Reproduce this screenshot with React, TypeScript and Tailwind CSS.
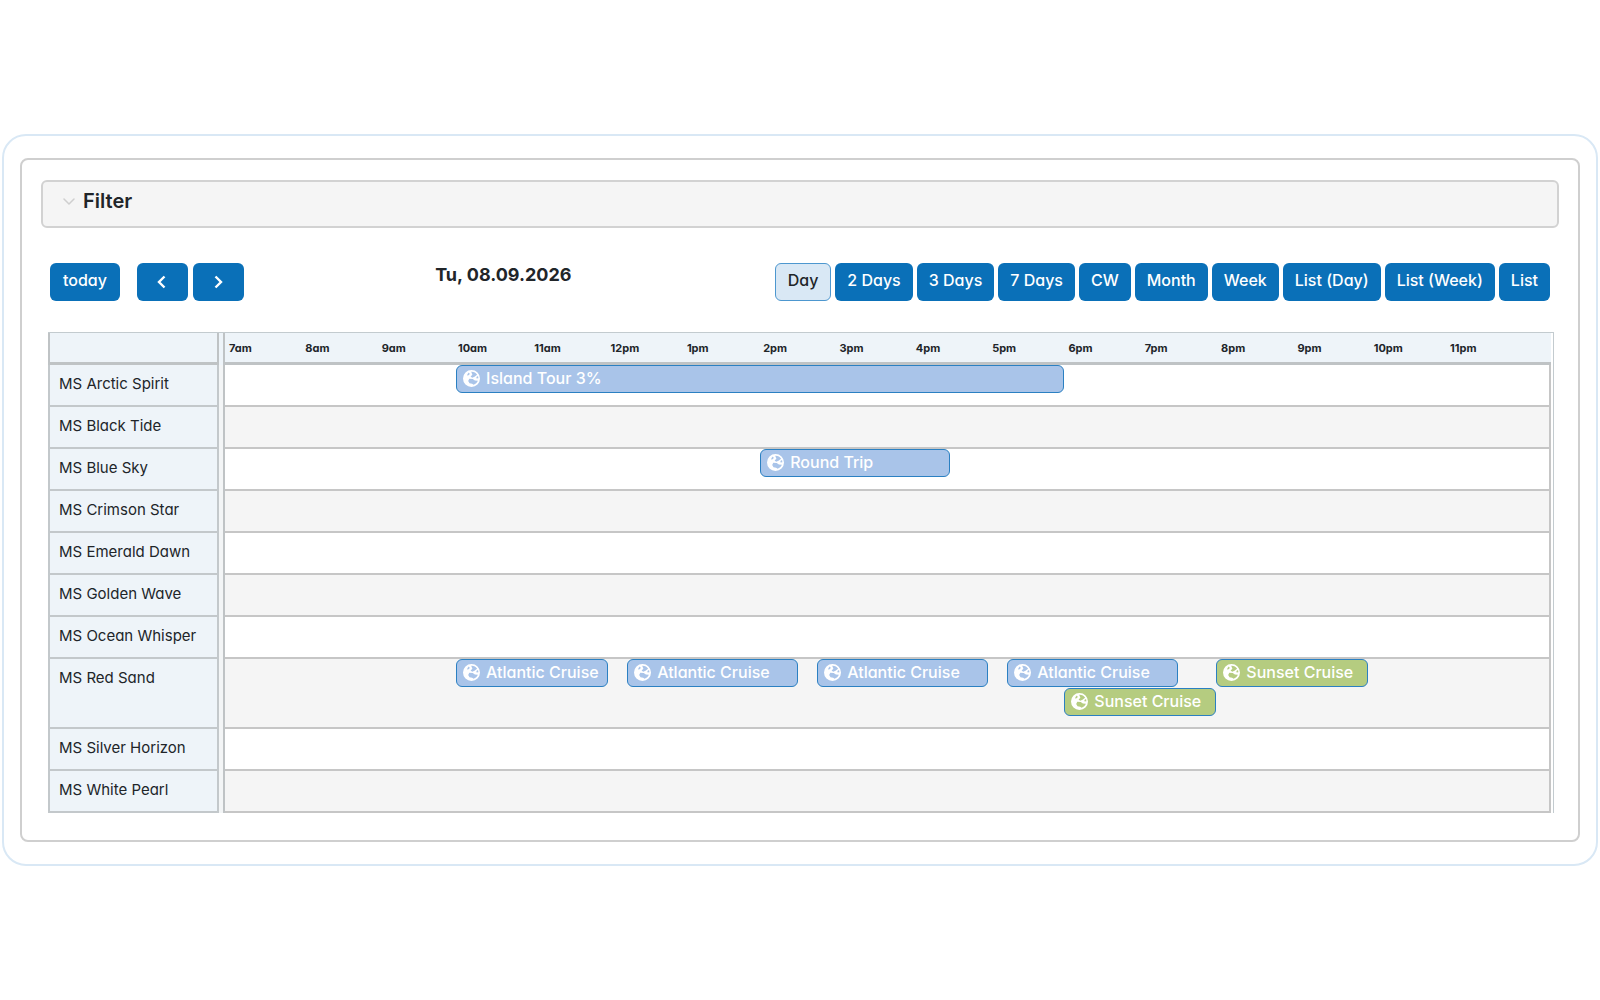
const FIRST_HOUR = 7
const VISIBLE_HOURS = 17.375

const HOURS = [
  '7am', '8am', '9am', '10am', '11am', '12pm', '1pm', '2pm', '3pm',
  '4pm', '5pm', '6pm', '7pm', '8pm', '9pm', '10pm', '11pm',
]

const VIEWS = ['Day', '2 Days', '3 Days', '7 Days', 'CW', 'Month', 'Week', 'List (Day)', 'List (Week)', 'List']

interface TourEvent {
  title: string
  start: number
  end: number
  color: 'blue' | 'green'
}

interface Ship {
  name: string
  lanes: TourEvent[][]
}

const SHIPS: Ship[] = [
  { name: 'MS Arctic Spirit', lanes: [[{ title: 'Island Tour 3%', start: 10, end: 18, color: 'blue' }]] },
  { name: 'MS Black Tide', lanes: [] },
  { name: 'MS Blue Sky', lanes: [[{ title: 'Round Trip', start: 14, end: 16.5, color: 'blue' }]] },
  { name: 'MS Crimson Star', lanes: [] },
  { name: 'MS Emerald Dawn', lanes: [] },
  { name: 'MS Golden Wave', lanes: [] },
  { name: 'MS Ocean Whisper', lanes: [] },
  {
    name: 'MS Red Sand',
    lanes: [
      [
        { title: 'Atlantic Cruise', start: 10, end: 12, color: 'blue' },
        { title: 'Atlantic Cruise', start: 12.25, end: 14.5, color: 'blue' },
        { title: 'Atlantic Cruise', start: 14.75, end: 17, color: 'blue' },
        { title: 'Atlantic Cruise', start: 17.25, end: 19.5, color: 'blue' },
        { title: 'Sunset Cruise', start: 20, end: 22, color: 'green' },
      ],
      [{ title: 'Sunset Cruise', start: 18, end: 20, color: 'green' }],
    ],
  },
  { name: 'MS Silver Horizon', lanes: [] },
  { name: 'MS White Pearl', lanes: [] },
]

const percent = (hours: number) => `${(hours / VISIBLE_HOURS) * 100}%`

export default function App() {
  return (
    <main className="flex min-h-screen items-center bg-white px-0.5 font-['Inter',sans-serif] text-[#212529] [font-feature-settings:'cv11']">
      <div className="w-full rounded-3xl border-2 border-[#d9e8f5] px-4 py-[22px]">
        <div className="rounded-lg border-2 border-[#cfcfcf] px-[19px] pt-5 pb-[27px]">
          <FilterPanel />
          <Toolbar />
          <Timeline />
        </div>
      </div>
    </main>
  )
}

function FilterPanel() {
  return (
    <button
      type="button"
      aria-expanded="false"
      className="flex h-12 w-full items-center gap-2 rounded-md border-2 border-[#d2d2d2] bg-[#f5f5f5] px-5 pb-1.5 text-xl font-semibold"
    >
      <ChevronDown />
      Filter
    </button>
  )
}

function Toolbar() {
  return (
    <div className="mt-[35px] flex items-start justify-between px-[9px]">
      <div className="flex gap-[5px]">
        <button type="button" className="mr-3 h-[38px] rounded-md bg-[#0a70b8] px-[13px] pb-1 font-medium text-white">
          today
        </button>
        <NavButton label="Previous day" path="M8.5 1.5L3 7l5.5 5.5" />
        <NavButton label="Next day" path="M3.5 1.5L9 7l-5.5 5.5" />
      </div>
      <h2 className="mr-3 text-lg leading-6 font-bold">Tu, 08.09.2026</h2>
      <div className="flex gap-1">
        {VIEWS.map((view) => (
          <button
            key={view}
            type="button"
            aria-pressed={view === 'Day'}
            className={
              view === 'Day'
                ? 'h-[38px] rounded-md border border-[#4d97cf] bg-[#d9e8f5] px-3 pb-1 font-medium'
                : 'h-[38px] rounded-md bg-[#0a70b8] px-3 pb-1 font-medium text-white'
            }
          >
            {view}
          </button>
        ))}
      </div>
    </div>
  )
}

function NavButton({ label, path }: { label: string; path: string }) {
  return (
    <button
      type="button"
      aria-label={label}
      className="flex h-[38px] w-[51px] items-center justify-center rounded-md bg-[#0a70b8] text-white"
    >
      <svg className="h-3.5 w-3" viewBox="0 0 12 14" fill="none" stroke="currentColor" strokeWidth={2.4} aria-hidden="true">
        <path d={path} />
      </svg>
    </button>
  )
}

function Timeline() {
  return (
    <div className="mr-[5px] ml-[7px] mt-[31px] border-t border-r border-[#c3cbcf] pr-0.5">
      <table className="w-full table-fixed border-separate border-spacing-0">
        <colgroup>
          <col className="w-[171px]" />
          <col className="w-1.5" />
          <col />
        </colgroup>
        <thead>
          <tr className="h-8 bg-[#eef4f9]">
            <th className="border-r-2 border-b-3 border-l-2 border-[#bfc3c5]" aria-label="Ship" />
            <td className="border-r-2 border-[#bfc3c5]" />
            <th className="border-b-3 border-[#bfc3c5] p-0">
              <div className="flex">
                {HOURS.map((hour) => (
                  <div key={hour} className="shrink-0 pl-1 text-left text-[11px] leading-4 font-bold" style={{ width: percent(1) }}>
                    {hour}
                  </div>
                ))}
              </div>
            </th>
          </tr>
        </thead>
        <tbody>
          {SHIPS.map((ship) => (
            <ShipRow key={ship.name} ship={ship} />
          ))}
        </tbody>
      </table>
    </div>
  )
}

function ShipRow({ ship }: { ship: Ship }) {
  return (
    <tr className="group">
      <th
        scope="row"
        className="border-r-2 border-b-2 border-l-2 border-[#c3c8cb] bg-[#eef4f9] px-[9px] pt-[7px] pb-[9px] text-left align-top text-[15px] leading-6 font-normal"
      >
        {ship.name}
      </th>
      <td className="border-r-2 border-[#bfc3c5] bg-[#f3f5f6]" />
      <td className="border-r-2 border-b-2 border-[#c6c6c6] p-0 align-top group-even:bg-[#f5f5f5]">
        <div className={ship.lanes.length > 1 ? 'ml-[3px] pb-2.5' : 'ml-[3px]'}>
          {ship.lanes.map((lane, index) => (
            <div key={index} className="relative h-[29px]">
              {lane.map((event) => (
                <EventBar key={event.start} event={event} />
              ))}
            </div>
          ))}
        </div>
      </td>
    </tr>
  )
}

function EventBar({ event }: { event: TourEvent }) {
  const color = event.color === 'blue' ? 'bg-[#a9c4e9]' : 'bg-[#b5cc80]'

  return (
    <a
      href="#"
      className={`absolute top-0 flex h-7 items-center gap-1.5 overflow-hidden rounded-md border border-[#2b80c2] px-1.5 pb-0.5 font-medium whitespace-nowrap text-white ${color}`}
      style={{ left: percent(event.start - FIRST_HOUR), width: percent(event.end - event.start) }}
    >
      <GlobeIcon />
      {event.title}
    </a>
  )
}

function GlobeIcon() {
  return (
    <svg className="h-[17px] w-[17px] shrink-0" viewBox="0 0 17 17" fill="currentColor" aria-hidden="true">
      <path
        fillRule="evenodd"
        d="M8.5 0a8.5 8.5 0 100 17 8.5 8.5 0 000-17zM8.2 1.8c2.5-.2 4.7.9 5.9 2.9l-2.6 2.1-2.3.9-1.6-1.2 1.8-1.8zM5.9 2.6l.9 1.4-1.2 1.3-1.6.2c.3-1.2 1-2.2 1.9-2.9zM6.3 8.8l3.4.2 2.2 1.6 3 .2c-.8 1.9-2.3 3.3-4.3 3.9l-1.5-.9-2.6-.6-1.3-2.2zM13.4 7l1.6-1 .4 2.2-1.8.4z"
      />
    </svg>
  )
}

function ChevronDown() {
  return (
    <svg className="h-3 w-3" viewBox="0 0 12 12" fill="none" stroke="#cfcfcf" strokeWidth={1.5} aria-hidden="true">
      <path strokeLinecap="round" strokeLinejoin="round" d="M1 4l5 5 5-5" />
    </svg>
  )
}
